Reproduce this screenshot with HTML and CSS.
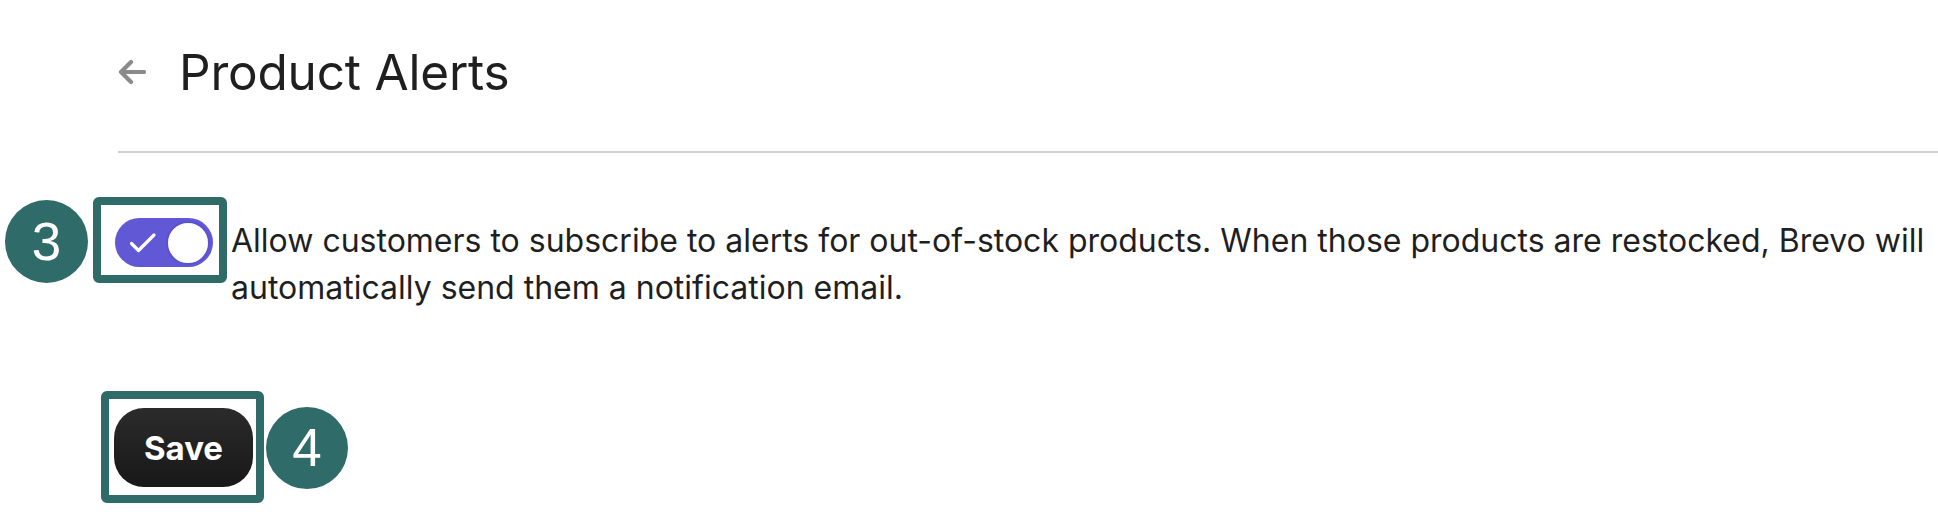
FILE: index.html
```html
<!DOCTYPE html>
<html lang="en">
<head>
<meta charset="utf-8">
<title>Product Alerts</title>
<link rel="stylesheet" href="styles.css">
</head>
<body>
<div class="page">
  <header class="header">
    <svg class="back" width="28" height="26" viewBox="0 0 28 26" aria-hidden="true">
      <path d="M26 13H3M13 3L3 13L13 23" fill="none" stroke="#8a8a8a" stroke-width="4.2" stroke-linecap="round" stroke-linejoin="round"/>
    </svg>
    <h1 class="title">Product Alerts</h1>
  </header>
  <div class="divider"></div>

  <div class="setting">
    <div class="badge badge-3">3</div>
    <div class="highlight highlight-toggle">
      <div class="toggle">
        <svg class="check" width="28" height="22" viewBox="0 0 28 22" aria-hidden="true">
          <path d="M2.5 11.5L9.5 18.5L25 3" fill="none" stroke="#fff" stroke-width="3.2" stroke-linecap="round" stroke-linejoin="round"/>
        </svg>
        <div class="knob"></div>
      </div>
    </div>
    <p class="desc">Allow customers to subscribe to alerts for out-of-stock products. When those products are restocked, Brevo will automatically send them a notification email.</p>
  </div>

  <div class="actions">
    <div class="highlight highlight-save">
      <button class="save" type="button">Save</button>
    </div>
    <div class="badge badge-4">4</div>
  </div>
</div>
</body>
</html>
```

FILE: styles.css
```css
* { box-sizing: border-box; }

html, body {
  margin: 0;
  padding: 0;
  background: #ffffff;
}

body {
  font-family: "Inter", "Noto Sans", sans-serif;
  color: #1f1f1f;
}

.page {
  width: 1938px;
  height: 518px;
  overflow: hidden;
  padding-top: 46px;
}

.header {
  display: flex;
  align-items: center;
  padding-left: 118px;
  height: 52px;
}

.back {
  display: block;
  flex: none;
}

.title {
  margin: 0 0 0 33px;
  font-size: 49.5px;
  font-weight: 400;
  line-height: 52px;
  letter-spacing: -0.2px;
  color: #1f1f1f;
}

.divider {
  margin-top: 53px;
  margin-left: 118px;
  height: 2px;
  background: #d0d0d0;
}

.setting {
  display: flex;
  align-items: flex-start;
  margin-top: 44px;
}

.badge {
  flex: none;
  width: 83px;
  height: 83px;
  border-radius: 50%;
  background: #2f6b69;
  color: #ffffff;
  font-family: "Liberation Sans", Arial, sans-serif;
  font-size: 53px;
  line-height: 83px;
  text-align: center;
}

.badge-3 {
  margin-left: 5px;
  margin-top: 3px;
}

.highlight {
  flex: none;
  border: 8px solid #2f6b69;
  border-radius: 6px;
  background: #ffffff;
}

.highlight-toggle {
  margin-left: 5px;
  width: 134px;
  height: 86px;
  padding: 13px 6px 8px 14px;
}

.toggle {
  position: relative;
  width: 98px;
  height: 49px;
  border-radius: 25px;
  background: #6158d6;
  display: flex;
  align-items: center;
  justify-content: space-between;
  padding: 0 3px 0 14px;
}

.check {
  display: block;
  margin-top: 1px;
}

.knob {
  width: 44px;
  height: 44px;
  border-radius: 50%;
  background: #ffffff;
  border: 2px solid #5a51d0;
}

.desc {
  margin: 20px 0 0 4px;
  width: 1705px;
  font-size: 32px;
  line-height: 47px;
  color: #1f1f1f;
}

.actions {
  display: flex;
  align-items: flex-start;
  margin-top: 80px;
  padding-left: 101px;
}

.highlight-save {
  width: 163px;
  height: 112px;
  padding: 9px 3px 8px 5px;
}

.save {
  display: block;
  width: 139px;
  height: 79px;
  border: none;
  border-radius: 30px;
  background: linear-gradient(#2b2b2b, #181818);
  color: #ffffff;
  font-family: "Inter", "Noto Sans", sans-serif;
  font-weight: 700;
  font-size: 33px;
  padding: 0;
  cursor: pointer;
}

.badge-4 {
  margin-left: 2px;
  margin-top: 16px;
  width: 82px;
  height: 82px;
  line-height: 82px;
}
```
